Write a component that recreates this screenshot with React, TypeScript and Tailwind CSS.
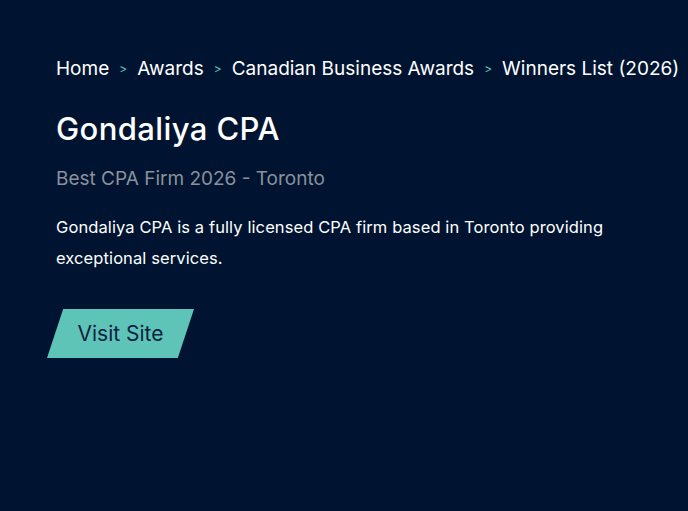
import React from "react";

export default function App() {
  const crumbs = ["Home", "Awards", "Canadian Business Awards", "Winners List (2026)"];
  return (
    <div className="min-h-[511px] w-full bg-[#001431] pl-[56px] pt-[55px]" style={{ fontFamily: "Inter, 'Noto Sans', sans-serif" }}>
      <nav className="flex items-center text-[19px] leading-[28px] text-white">
        {crumbs.map((c, i) => (
          <React.Fragment key={c}>
            {i > 0 && <span className="mx-[10px] text-[12px] text-[#5fc4b8]">&gt;</span>}
            <span>{c}</span>
          </React.Fragment>
        ))}
      </nav>
      <h1 className="mt-[26px] text-[31px] leading-[40px] font-medium tracking-[0.4px] text-white">Gondaliya CPA</h1>
      <p className="mt-[17px] text-[19px] leading-[26px] text-[#8a919b]">Best CPA Firm 2026 - Toronto</p>
      <p className="mt-[20px] max-w-[610px] text-[16.5px] leading-[31px] tracking-[0.1px] text-white">
        Gondaliya CPA is a fully licensed CPA firm based in Toronto providing exceptional services.
      </p>
      <div className="mt-[35px] -ml-[9px]">
        <a
          className="inline-flex h-[49px] w-[147px] items-center justify-center bg-[#5fc4b8] text-[21px] text-[#0b2240]"
          style={{ clipPath: "polygon(11% 0, 100% 0, 89% 100%, 0 100%)" }}
        >
          Visit Site
        </a>
      </div>
    </div>
  );
}
